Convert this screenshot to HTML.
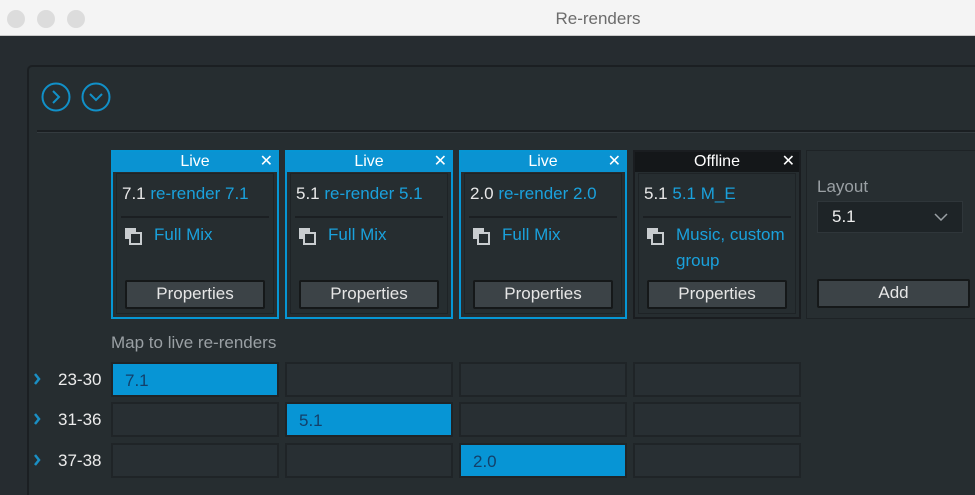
<!DOCTYPE html>
<html><head><style>
*{box-sizing:border-box;margin:0;padding:0}
body{width:975px;height:480px;overflow:hidden;background:#262c30;font-family:"Liberation Sans",sans-serif;position:relative}
.tb{position:absolute;left:0;top:0;width:975px;height:36px;background:#f4f4f4;border-bottom:1px solid #c9c9c9}
.dot{position:absolute;top:10px;width:18px;height:18px;border-radius:50%;background:#dcdcdc}
.panel{position:absolute;left:27px;top:65px;width:960px;height:430px;border-top:2px solid #1b1f22;border-left:2px solid #1b1f22;border-radius:5px 0 0 0;background:#262d30}
.sep{position:absolute;left:37px;top:130px;width:938px;height:3px;background:#1b1f22;border-bottom:1px solid #343b3f}
.circ{position:absolute;top:82px;width:30px;height:30px}
.card{position:absolute;top:150px;width:168px;height:169px;border:2px solid #0696d4;background:#262d30}
.card.off{border-color:#1a1d20}
.hd{height:20px;background:#0a93d2;color:#fff;font-size:16px;text-align:center;line-height:20px;position:relative}
.off .hd{background:#141719}
.hd .x{position:absolute;right:4px;top:0;font-size:16px}
.inner{position:absolute;left:3px;top:21px;right:3px;bottom:3px;background:#262d30;border:1px solid #1e2326}
.r1{position:absolute;left:5px;top:10px;font-size:17px;color:#e8e8e8;white-space:nowrap}
.b{color:#1aa1dc}
.line{position:absolute;left:4px;right:4px;top:42px;height:2px;background:#1b1f22}
.icon{position:absolute;left:7px;top:53px}
.r2{position:absolute;left:37px;top:48px;font-size:17px;color:#1aa1dc;line-height:26px}
.btn{position:absolute;left:8px;right:8px;top:106px;height:29px;border:2px solid #151819;background:#3c4347;color:#e6e6e6;font-size:17px;text-align:center;line-height:24px;border-radius:2px}
.lay{position:absolute;left:806px;top:150px;width:175px;height:169px;border:1px solid #1e2326;background:#272e31}
.lbl{position:absolute;left:111px;top:333px;font-size:17px;color:#9aa0a4}
.rl{position:absolute;left:58px;font-size:17px;color:#ececec}
.ch{position:absolute;left:33px;width:8px;height:12px}
.cell{position:absolute;width:168px;height:35px;background:#282f33;border:2px solid #1f2427}
.cell.on{background:#0795d5;border-color:#1f2427;color:#13406a;font-size:17px;padding:7px 0 0 12px}
</style></head><body>
<div class="tb"><div class="dot" style="left:7px"></div><div class="dot" style="left:37px"></div><div class="dot" style="left:67px"></div></div>
<div style="position:absolute;top:9px;left:0;width:1196px;text-align:center;font-size:17px;color:#6c6c6c">Re-renders</div>
<div class="panel"></div>
<div class="sep"></div>
<svg class="circ" style="left:41px" viewBox="0 0 30 30"><circle cx="15" cy="15" r="13.5" fill="none" stroke="#1190c8" stroke-width="2"/><path d="M12 9l6 6-6 6" fill="none" stroke="#1190c8" stroke-width="2"/></svg>
<svg class="circ" style="left:81px" viewBox="0 0 30 30"><circle cx="15" cy="15" r="13.5" fill="none" stroke="#1190c8" stroke-width="2"/><path d="M9 12l6 6 6-6" fill="none" stroke="#1190c8" stroke-width="2"/></svg>

<div class="card" style="left:111px"><div class="hd">Live<span class="x">✕</span></div><div class="inner"><div class="r1">7.1 <span class="b">re-render 7.1</span></div><div class="line"></div><svg class="icon" width="20" height="18"><rect x="1" y="1" width="11" height="11" fill="#c9cdd0"/><rect x="6" y="6" width="11" height="11" fill="#262d30" stroke="#c9cdd0" stroke-width="2"/></svg><div class="r2">Full Mix</div><div class="btn">Properties</div></div></div>
<div class="card" style="left:285px"><div class="hd">Live<span class="x">✕</span></div><div class="inner"><div class="r1">5.1 <span class="b">re-render 5.1</span></div><div class="line"></div><svg class="icon" width="20" height="18"><rect x="1" y="1" width="11" height="11" fill="#c9cdd0"/><rect x="6" y="6" width="11" height="11" fill="#262d30" stroke="#c9cdd0" stroke-width="2"/></svg><div class="r2">Full Mix</div><div class="btn">Properties</div></div></div>
<div class="card" style="left:459px"><div class="hd">Live<span class="x">✕</span></div><div class="inner"><div class="r1">2.0 <span class="b">re-render 2.0</span></div><div class="line"></div><svg class="icon" width="20" height="18"><rect x="1" y="1" width="11" height="11" fill="#c9cdd0"/><rect x="6" y="6" width="11" height="11" fill="#262d30" stroke="#c9cdd0" stroke-width="2"/></svg><div class="r2">Full Mix</div><div class="btn">Properties</div></div></div>
<div class="card off" style="left:633px"><div class="hd">Offline<span class="x">✕</span></div><div class="inner"><div class="r1">5.1 <span class="b">5.1 M_E</span></div><div class="line"></div><svg class="icon" width="20" height="18"><rect x="1" y="1" width="11" height="11" fill="#c9cdd0"/><rect x="6" y="6" width="11" height="11" fill="#262d30" stroke="#c9cdd0" stroke-width="2"/></svg><div class="r2">Music, custom<br>group</div><div class="btn">Properties</div></div></div>
<div class="lay">
<div style="position:absolute;left:10px;top:26px;font-size:17px;color:#9aa0a4">Layout</div>
<div style="position:absolute;left:10px;top:50px;width:146px;height:32px;background:#1e2427;border:1px solid #2f363a;color:#eee;font-size:17px;padding:5px 0 0 14px">5.1<svg style="position:absolute;right:14px;top:11px" width="14" height="8"><path d="M1 1l6 6 6-6" fill="none" stroke="#9aa0a4" stroke-width="1.5"/></svg></div>
<div class="btn" style="left:10px;right:10px;top:128px">Add</div>
</div>
<div class="lbl">Map to live re-renders</div>
<svg class="ch" style="top:373px"><path d="M2 1l4 5-4 5" fill="none" stroke="#1a8fc4" stroke-width="2.5"/></svg><div class="rl" style="top:370px">23-30</div>
<svg class="ch" style="top:413px"><path d="M2 1l4 5-4 5" fill="none" stroke="#1a8fc4" stroke-width="2.5"/></svg><div class="rl" style="top:410px">31-36</div>
<svg class="ch" style="top:454px"><path d="M2 1l4 5-4 5" fill="none" stroke="#1a8fc4" stroke-width="2.5"/></svg><div class="rl" style="top:451px">37-38</div>
<div class="cell on" style="left:111px;top:362px">7.1</div><div class="cell" style="left:285px;top:362px"></div><div class="cell" style="left:459px;top:362px"></div><div class="cell" style="left:633px;top:362px"></div>
<div class="cell" style="left:111px;top:402px"></div><div class="cell on" style="left:285px;top:402px">5.1</div><div class="cell" style="left:459px;top:402px"></div><div class="cell" style="left:633px;top:402px"></div>
<div class="cell" style="left:111px;top:443px"></div><div class="cell" style="left:285px;top:443px"></div><div class="cell on" style="left:459px;top:443px">2.0</div><div class="cell" style="left:633px;top:443px"></div>
</body></html>
